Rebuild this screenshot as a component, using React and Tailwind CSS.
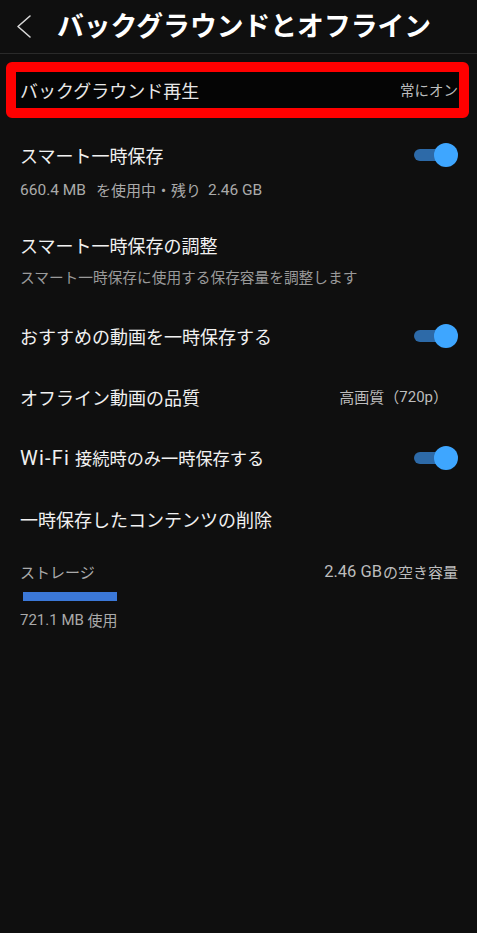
import React from "react";

const font = { fontFamily: 'Roboto, "Noto Sans CJK JP", "Noto Sans", sans-serif' };
const cjk = { fontFamily: '"Noto Sans CJK JP", sans-serif' };

function J({ children, className = "" }) {
  return (
    <span className={"text-[15px] " + className} style={cjk}>
      {children}
    </span>
  );
}

function Toggle() {
  return (
    <div className="relative w-[44px] h-[24px] shrink-0">
      <div className="absolute left-0 top-[6px] w-[39px] h-[12px] rounded-full bg-[#2d6aa8]" />
      <div className="absolute right-0 top-0 w-[24px] h-[24px] rounded-full bg-[#3ea6ff]" />
    </div>
  );
}

export default function App() {
  return (
    <div
      className="w-[477px] h-[933px] bg-[#0f0f0f] text-[#f1f1f1] overflow-hidden"
      style={font}
    >
      <header className="h-[54px] flex items-center border-b border-[#2a2a2a]">
        <div className="w-[57px] flex items-center pl-[15px]">
          <svg width="18" height="26" viewBox="0 0 18 26" fill="none">
            <polyline
              points="15,2 3,12.5 15,23"
              stroke="#d8d8d8"
              strokeWidth="1.6"
              strokeLinecap="round"
              strokeLinejoin="round"
            />
          </svg>
        </div>
        <h1 className="text-[26.8px] font-bold text-white leading-none -mt-[3px]" style={cjk}>
          バックグラウンドとオフライン
        </h1>
      </header>

      <div className="mt-[8px] ml-[6px] mr-[8px] h-[56px] border-[10px] border-[#ff0000] rounded-[6px] bg-[#050505] flex items-center justify-between pl-[4px] pr-[1px]" style={cjk}>
        <span className="text-[18px] leading-[24px] text-[#e8e8e8]">
          バックグラウンド再生
        </span>
        <span className="text-[14.5px] leading-[20px] text-[#bdbdbd]">常にオン</span>
      </div>

      <div className="px-[20px] pr-[19px] flex flex-col">
        <div className="mt-[25px] flex items-center justify-between h-[24px]" style={cjk}>
          <span className="text-[18px] leading-[24px]">スマート一時保存</span>
          <Toggle />
        </div>
        <div className="mt-[13px] h-[20px] flex items-center whitespace-pre text-[15.5px] leading-[20px] text-[#aaaaaa]">
          <span>660.4 MB</span>
          <J className="ml-[10px]">を使用中・残り</J>
          <span className="ml-[7px]">2.46 GB</span>
        </div>

        <div className="mt-[33px] text-[18px] leading-[24px]" style={cjk}>スマート一時保存の調整</div>
        <div className="mt-[10px] text-[14.7px] leading-[20px] text-[#9a9a9a]" style={cjk}>
          スマート一時保存に使用する保存容量を調整します
        </div>

        <div className="mt-[37px] flex items-center justify-between h-[24px]" style={cjk}>
          <span className="text-[18px] leading-[24px]">おすすめの動画を一時保存する</span>
          <Toggle />
        </div>

        <div className="mt-[37px] flex items-center justify-between h-[24px]">
          <span className="text-[18px] leading-[24px]" style={cjk}>オフライン動画の品質</span>
          <span className="h-[20px] flex items-center whitespace-pre text-[15px] leading-[20px] text-[#bdbdbd] pr-[10px]">
            <J>高画質（</J>720p<J>）</J>
          </span>
        </div>

        <div className="mt-[37px] flex items-center justify-between h-[24px]">
          <span className="h-[24px] flex items-center whitespace-pre leading-[24px]">
            <span className="text-[20px] tracking-[1.2px]">Wi-Fi</span>
            <span className="ml-[5px] text-[17.2px]" style={cjk}>接続時のみ一時保存する</span>
          </span>
          <Toggle />
        </div>

        <div className="mt-[37px] text-[18px] leading-[24px]" style={cjk}>一時保存したコンテンツの削除</div>

        <div className="mt-[31px] flex items-center justify-between h-[20px] text-[15px] leading-[20px] text-[#aaaaaa]">
          <span style={cjk}>ストレージ</span>
          <span className="h-[20px] flex items-center whitespace-pre text-[16.5px] text-[#bdbdbd]">
            2.46 GB<J className="ml-[1px]">の空き容量</J>
          </span>
        </div>
        <div className="mt-[10px] ml-[3px] w-[94px] h-[9px] bg-[#3b78d8]" />
        <div className="mt-[9px] h-[20px] flex items-center whitespace-pre text-[15px] leading-[20px] text-[#aaaaaa]">
          721.1 MB <J>使用</J>
        </div>
      </div>
    </div>
  );
}
